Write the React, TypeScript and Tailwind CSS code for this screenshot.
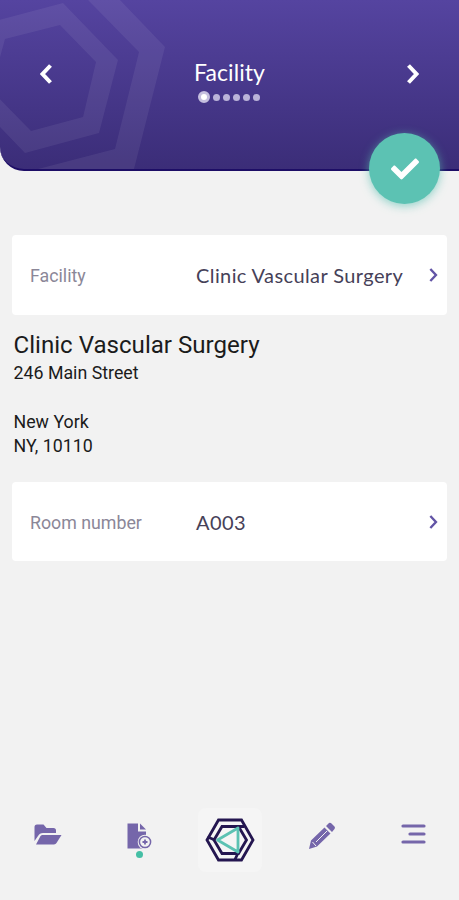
import { FaCheck } from "react-icons/fa"

const STEPS = 6

type ChevronProps = {
  direction?: "left" | "right"
  className?: string
}

const Chevron = ({ direction = "right", className = "" }: ChevronProps) => (
  <svg
    viewBox="0 0 12 20"
    className={className}
    fill="none"
    stroke="currentColor"
    strokeLinejoin="miter"
  >
    <path d={direction === "right" ? "M1.5 1.5 9.5 10 1.5 18.5" : "M10.5 1.5 2.5 10 10.5 18.5"} />
  </svg>
)

const HeaderPattern = () => (
  <svg viewBox="0 0 170 169" className="absolute left-0 top-0 h-[169px] w-[170px]">
    <g fill="#fff" fillOpacity="0.065" fillRule="evenodd">
      <path d="M-12 23 63 3 118 60 99 133 25 153-30 96ZM5 39-9 90 31 131 83 117 96 62 60 25Z" />
      <path d="M88 0H120L165 47 134 169H38L115 149 139 52Z" />
    </g>
  </svg>
)

const FolderIcon = () => (
  <svg viewBox="0 0 28 22" className="h-[22px] w-7" fill="#7566aa">
    <path d="M.5 17V3A2.5 2.5 0 0 1 3 .5H9.5L12.5 4H19.5A2.5 2.5 0 0 1 22 6.5V9H9C6.5 9 5.2 10 4 12Z" />
    <path d="M9 11H27.5L22.5 19A3 3 0 0 1 20 20.5H2L6 13C6.7 11.6 7.5 11 9 11Z" />
  </svg>
)

const FileIcon = () => (
  <svg viewBox="0 0 25 28" className="h-7 w-[25px]">
    <path d="M.5.5H11V8.5H19V25.5H.5Z" fill="#7566aa" />
    <path d="M13 .5 19 6.5H13Z" fill="#7566aa" />
    <circle cx="18" cy="19" r="7.3" fill="#f2f2f2" />
    <circle cx="18" cy="19" r="5.6" fill="#f2f2f2" stroke="#7566aa" strokeWidth="1.5" />
    <path d="M18 16.5V21.5M15.5 19H20.5" stroke="#7566aa" strokeWidth="1.8" />
  </svg>
)

const LogoIcon = () => (
  <svg viewBox="0 0 50 44" className="h-11 w-[50px]" fill="none">
    <g stroke="#241650" strokeWidth="2.8">
      <path d="M2 22 13.5 2H36.5L48 22 36.5 42H13.5Z" />
      <path d="M9 22 17 8.5H33.5L41.5 22 33.5 35.5H17Z" />
      <path d="M2.5 19 10 22M32 8.5H39.5M33.5 34 30 41.5" />
    </g>
    <path d="M12.5 22 33 10V34Z" stroke="#5cc2b3" strokeWidth="2.8" strokeLinejoin="round" />
  </svg>
)

const PencilIcon = () => (
  <svg viewBox="0 0 28 28" className="size-7" fill="#7566aa">
    <path d="M1 27 3 18.5 16.5 5.5 22.5 11.5 9 24.5ZM18 4 21 1Q22.5.5 23.5 1.5L26.5 4.5Q27.5 5.5 26.5 7L24 10Z" />
    <path d="M4.5 20 8 24M8 20 19 9" stroke="#f2f2f2" strokeWidth="1" />
  </svg>
)

const MenuIcon = () => (
  <svg viewBox="0 0 25 20" className="h-5 w-[25px]" stroke="#7566aa" strokeWidth="3.2" strokeLinecap="round">
    <path d="M2 2H23M9 10H23M2 18H23" />
  </svg>
)

type FieldProps = {
  label: string
  value: string
  className: string
}

const Field = ({ label, value, className }: FieldProps) => (
  <button
    className={`flex w-full items-center rounded bg-white pl-[18px] pr-[9px] text-left ${className}`}
  >
    <span className="w-[166px] pt-[3px] text-[17.8px] text-[#8b8798]">{label}</span>
    <span className="flex-1 whitespace-nowrap font-['Lato',sans-serif] text-[20px] tracking-[0.4px] text-[#464158]">
      {value}
    </span>
    <Chevron className="h-[14px] w-[9px] stroke-[3.4] text-[#6254a6]" />
  </button>
)

const App = () => {
  return (
    <div className="flex h-[900px] w-[459px] flex-col overflow-hidden bg-[#f2f2f2] font-['Roboto',sans-serif]">
      <header className="relative h-[171px] shrink-0">
        <div className="relative h-full overflow-hidden rounded-bl-[24px] border-b-2 border-[#1d0d66] bg-linear-to-b from-[#5544a0] to-[#3b2d78]">
          <HeaderPattern />
          <div className="relative flex items-start justify-between px-10 pt-[57px] text-white">
            <button className="pt-[7px]">
              <Chevron direction="left" className="h-5 w-3 stroke-[4]" />
            </button>
            <div className="flex flex-col items-center">
              <h1 className="font-['Lato',sans-serif] text-[23px] leading-[30px] tracking-[0.1px]">
                Facility
              </h1>
              <div className="mr-[2px] mt-1 flex h-3 items-center gap-[3px]">
                {new Array(STEPS).fill(0).map((_, i) => (
                  <span
                    key={i}
                    className={
                      i === 0
                        ? "size-3 rounded-full border-[3px] border-[#c5bfdf] bg-white"
                        : "size-[7px] rounded-full bg-[#bbb4d9]"
                    }
                  />
                ))}
              </div>
            </div>
            <button className="pt-[7px]">
              <Chevron className="h-5 w-3 stroke-[4]" />
            </button>
          </div>
        </div>
        <button className="absolute right-[19px] top-[133px] flex size-[71px] items-center justify-center rounded-full bg-[#5cc2b3] shadow-[0_2px_10px_#5cc2b3aa]">
          <FaCheck className="size-7 text-white" />
        </button>
      </header>

      <main className="flex-1 px-3 pt-16">
        <Field label="Facility" value="Clinic Vascular Surgery" className="h-20" />
        <div className="h-[167px] pl-[1.5px] pt-[14px] text-[17.8px] leading-[24px] text-[#1b1b1b]">
          <h2 className="text-[24.1px] leading-8">Clinic Vascular Surgery</h2>
          <p>246 Main Street</p>
          <p className="mt-[25px]">New York</p>
          <p>NY, 10110</p>
        </div>
        <Field label="Room number" value="A003" className="h-[79px]" />
      </main>

      <nav className="grid h-[100px] shrink-0 grid-cols-5 items-start justify-items-center pl-[2px] pt-2">
        <button className="pt-4">
          <FolderIcon />
        </button>
        <button className="flex flex-col items-center pt-[15px]">
          <FileIcon />
          <span className="size-[7px] rounded-full bg-[#45bfa5]" />
        </button>
        <button className="flex size-16 items-center justify-center rounded-lg bg-[#f5f5f5]">
          <LogoIcon />
        </button>
        <button className="pt-[14px]">
          <PencilIcon />
        </button>
        <button className="pt-4">
          <MenuIcon />
        </button>
      </nav>
    </div>
  )
}

export default App
